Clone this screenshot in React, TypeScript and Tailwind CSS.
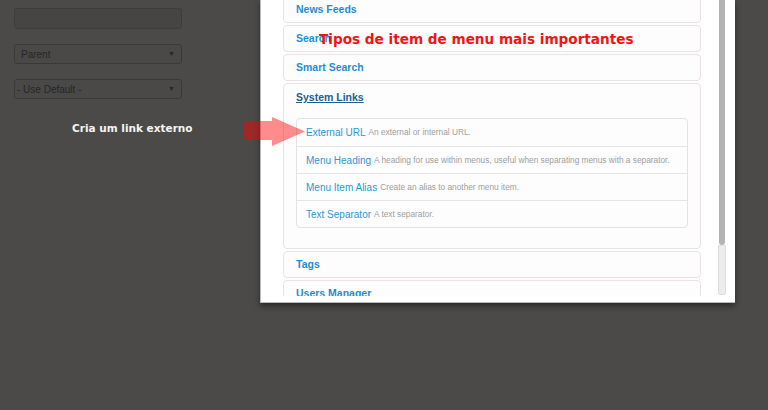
import React from "react";

const panelBase =
  "border border-[#ebe3e3] rounded-[4px] bg-[#fdfdfd] shrink-0";

function Panel({ title, active }: { title: string; active?: boolean }) {
  return (
    <div className={`${panelBase} h-[27px] flex items-center pl-[12px]`}>
      <span
        className={
          active
            ? "text-[10.5px] font-bold text-[#1d5f90] underline"
            : "text-[10.5px] font-bold text-[#1f8dd6]"
        }
      >
        {title}
      </span>
    </div>
  );
}

const items = [
  { t: "External URL", d: "An external or internal URL." },
  {
    t: "Menu Heading",
    d: "A heading for use within menus, useful when separating menus with a separator.",
  },
  { t: "Menu Item Alias", d: "Create an alias to another menu item." },
  { t: "Text Separator", d: "A text separator." },
];

export default function App() {
  return (
    <div
      className="w-[768px] h-[410px] bg-[#4b4a48] relative overflow-hidden flex items-start"
      style={{ fontFamily: '"Liberation Sans", Arial, sans-serif' }}
    >
      {/* Page behind overlay */}
      <div className="w-[260px] shrink-0 pt-[8px] pl-[14px] flex flex-col">
        <div className="w-[168px] h-[21px] rounded-[3px] border border-[#3e3d3b] bg-[#464543]" />
        <div className="mt-[15px] w-[168px] h-[20px] rounded-[3px] border border-[#3a3937] bg-[#4a4947] flex items-center justify-between pl-[6px] pr-[6px]">
          <span className="text-[10px] text-[#262626]">Parent</span>
          <span className="text-[7px] text-[#262626]">▼</span>
        </div>
        <div className="mt-[15px] w-[168px] h-[20px] rounded-[3px] border border-[#3a3937] bg-[#4a4947] flex items-center justify-between pl-[2px] pr-[6px]">
          <span className="text-[10px] text-[#262626]">- Use Default -</span>
          <span className="text-[7px] text-[#262626]">▼</span>
        </div>
      </div>

      {/* Modal */}
      <div className="w-[475px] h-[303px] shrink-0 bg-white border-l border-b border-[#b9b9b9] shadow-[0_3px_6px_rgba(0,0,0,0.45)] flex">
        <div className="w-[441px] h-[296px] overflow-hidden pl-[22px]">
          <div className="w-[418px] flex flex-col gap-[2px] mt-[-4px]">
            <Panel title="News Feeds" />
            <Panel title="Search" />
            <Panel title="Smart Search" />
            <div className={`${panelBase} h-[166px] flex flex-col`}>
              <div className="h-[27px] flex items-center pl-[12px]">
                <span className="text-[10.5px] font-bold text-[#1d5f90] underline">
                  System Links
                </span>
              </div>
              <div className="mt-[7px] mx-[12px] border border-[#e2e2e2] rounded-[4px] flex flex-col">
                {items.map((it, i) => (
                  <div
                    key={it.t}
                    className={`h-[27px] flex items-center pl-[9px] whitespace-nowrap ${
                      i > 0 ? "border-t border-[#e4e4e4]" : ""
                    }`}
                  >
                    <span className="text-[10px] text-[#2a98d6]">{it.t}</span>
                    <span className="text-[8.3px] text-[#9d9d9d] ml-[3px]">{it.d}</span>
                  </div>
                ))}
              </div>
            </div>
            <Panel title="Tags" />
            <Panel title="Users Manager" />
          </div>
        </div>
        {/* scrollbar */}
        <div className="w-[8px] h-[295px] ml-[16px] flex flex-col items-center">
          <div className="w-[6px] h-[245px] bg-[#b3b3b5] rounded-b-[3px]" />
          <div className="w-[8px] flex-1 bg-[#ececee] border border-[#dedede] rounded-b-[2px]" />
        </div>
      </div>

      {/* Annotations */}
      <div
        className="absolute left-[72px] top-[121px] text-[10.5px] font-bold text-[#f4f4f4] whitespace-nowrap"
        style={{ fontFamily: '"DejaVu Sans", sans-serif' }}
      >
        Cria um link externo
      </div>
      <div
        className="absolute left-[319px] top-[29px] text-[13.6px] font-bold text-[#f41212] whitespace-nowrap"
        style={{ fontFamily: '"DejaVu Sans", sans-serif' }}
      >
        Tipos de item de menu mais importantes
      </div>
      <svg
        className="absolute left-[243px] top-[117px]"
        width="63"
        height="30"
        viewBox="0 0 63 30"
      >
        <polygon
          points="0,4 29,4 29,0 62,14.5 29,29 29,23 0,23"
          fill="rgba(255,0,0,0.45)"
        />
      </svg>
    </div>
  );
}
